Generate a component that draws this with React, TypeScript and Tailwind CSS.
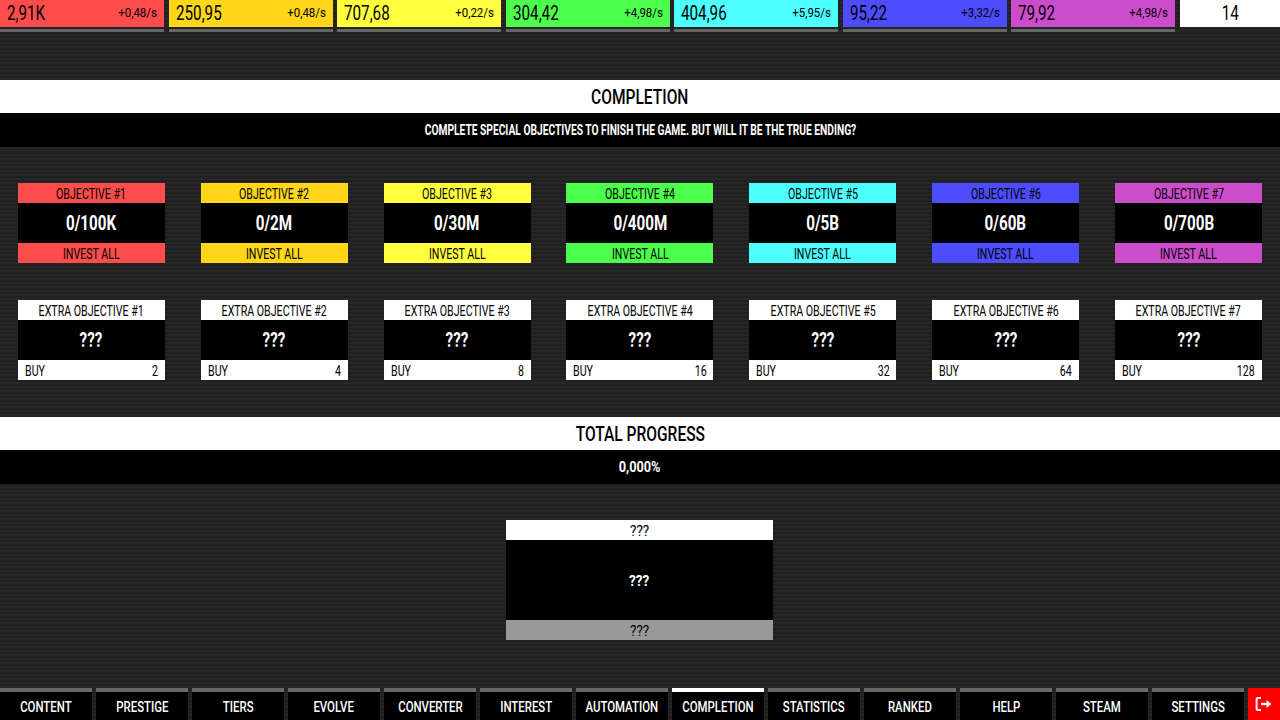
import React from 'react';

const font = "font-['Roboto',sans-serif]";

const resources = [
  { value: '2,91K', rate: '+0,48/s', bg: 'bg-[#ff4d4d]' },
  { value: '250,95', rate: '+0,48/s', bg: 'bg-[#ffd61a]' },
  { value: '707,68', rate: '+0,22/s', bg: 'bg-[#ffff40]' },
  { value: '304,42', rate: '+4,98/s', bg: 'bg-[#4dff4d]' },
  { value: '404,96', rate: '+5,95/s', bg: 'bg-[#4dffff]' },
  { value: '95,22', rate: '+3,32/s', bg: 'bg-[#4d4dff]' },
  { value: '79,92', rate: '+4,98/s', bg: 'bg-[#cc4dcc]' },
];

const objectives = [
  { goal: '0/100K', bg: 'bg-[#ff4d4d]', buy: 2 },
  { goal: '0/2M', bg: 'bg-[#ffd61a]', buy: 4 },
  { goal: '0/30M', bg: 'bg-[#ffff40]', buy: 8 },
  { goal: '0/400M', bg: 'bg-[#4dff4d]', buy: 16 },
  { goal: '0/5B', bg: 'bg-[#4dffff]', buy: 32 },
  { goal: '0/60B', bg: 'bg-[#4d4dff]', buy: 64 },
  { goal: '0/700B', bg: 'bg-[#cc4dcc]', buy: 128 },
];

const tabs = ['CONTENT', 'PRESTIGE', 'TIERS', 'EVOLVE', 'CONVERTER', 'INTEREST', 'AUTOMATION', 'COMPLETION', 'STATISTICS', 'RANKED', 'HELP', 'STEAM', 'SETTINGS'];

// the game's font is a condensed one, Roboto squeezed gets close
const Narrow: React.FC<{ children: React.ReactNode; className?: string }> = ({ children, className = 'origin-center scale-x-[0.76]' }) => (
  <span className={`inline-block whitespace-nowrap ${className}`}>{children}</span>
);

const SectionHeader: React.FC<{ title: string; sub: string; subScale: string; subSize: string }> = ({ title, sub, subScale, subSize }) => (
  <div>
    <div className="h-[33px] pt-[2px] bg-white text-black flex items-center justify-center text-[21px] font-medium">
      <Narrow className="scale-x-[0.74]">{title}</Narrow>
    </div>
    <div className={`h-[34px] bg-black text-white flex items-center justify-center font-bold ${subSize}`}>
      <Narrow className={subScale}>{sub}</Narrow>
    </div>
  </div>
);

export default function App() {
  return (
    <div className={`w-[1280px] h-[720px] overflow-hidden flex flex-col text-black bg-[#222222] bg-[repeating-linear-gradient(180deg,#202020_0px,#202020_2px,#262626_2px,#262626_4px)] ${font}`}>
      <div className="flex justify-between h-[32px]">
        {resources.map((r) => (
          <div key={r.bg} className="w-[164px] flex flex-col">
            <div className={`h-[27px] pb-px ${r.bg} flex items-center justify-between pl-[7px] pr-[7px]`}>
              <Narrow className="origin-left scale-x-[0.76] text-[20px]">{r.value}</Narrow>
              <Narrow className="origin-right scale-x-[0.88] text-[13px]">{r.rate}</Narrow>
            </div>
            <div className="mt-[2px] h-[3px] bg-[#666666]" />
          </div>
        ))}
        <div className="w-[100px] h-[27px] pb-px bg-white flex items-center justify-center text-[20px]">
          <Narrow>14</Narrow>
        </div>
      </div>

      <div className="mt-[48px]">
        <SectionHeader title="COMPLETION" sub="COMPLETE SPECIAL OBJECTIVES TO FINISH THE GAME. BUT WILL IT BE THE TRUE ENDING?" subScale="scale-x-[0.73]" subSize="text-[14px]" />
      </div>

      <div className="mt-[36px] grid grid-cols-7">
        {objectives.map((o, i) => (
          <div key={o.bg} className="w-[147px] mx-auto flex flex-col">
            <div className={`h-[20px] pt-[2px] ${o.bg} flex items-center justify-center text-[14px]`}><Narrow>OBJECTIVE #{i + 1}</Narrow></div>
            <div className="h-[40px] bg-black text-white flex items-center justify-center font-bold text-[20px]"><Narrow>{o.goal}</Narrow></div>
            <div className={`h-[20px] pt-[2px] ${o.bg} flex items-center justify-center text-[14px]`}><Narrow>INVEST ALL</Narrow></div>
          </div>
        ))}
      </div>

      <div className="mt-[37px] grid grid-cols-7">
        {objectives.map((o, i) => (
          <div key={o.bg} className="w-[147px] mx-auto flex flex-col">
            <div className="h-[20px] pt-[2px] bg-white flex items-center justify-center text-[14px]"><Narrow>EXTRA OBJECTIVE #{i + 1}</Narrow></div>
            <div className="h-[40px] bg-black text-white flex items-center justify-center font-bold text-[20px]"><Narrow>???</Narrow></div>
            <div className="h-[20px] pt-[2px] bg-white flex items-center justify-between px-[7px] text-[14px]">
              <Narrow className="origin-left scale-x-[0.76]">BUY</Narrow>
              <Narrow className="origin-right scale-x-[0.76]">{o.buy}</Narrow>
            </div>
          </div>
        ))}
      </div>

      <div className="mt-[37px]">
        <SectionHeader title="TOTAL PROGRESS" sub="0,000%" subScale="scale-x-[0.85]" subSize="text-[15px]" />
      </div>

      <div className="mt-[36px] w-[267px] ml-[506px] flex flex-col text-[15px]">
        <div className="h-[20px] pt-[2px] bg-white flex items-center justify-center"><Narrow className="scale-x-[0.9]">???</Narrow></div>
        <div className="h-[80px] pt-[2px] bg-black text-white font-bold flex items-center justify-center"><Narrow className="scale-x-[0.9]">???</Narrow></div>
        <div className="h-[20px] pt-[2px] bg-[#999999] flex items-center justify-center"><Narrow className="scale-x-[0.9]">???</Narrow></div>
      </div>

      <div className="mt-auto flex h-[32px]">
        {tabs.map((t) => (
          <div key={t} className="w-[96px] pr-[4px] flex flex-col">
            <div className={`h-[4px] ${t === 'COMPLETION' ? 'bg-white' : 'bg-[#666666]'}`} />
            <div className="flex-1 pt-[2px] bg-black text-white font-medium flex items-center justify-center text-[15px]"><Narrow>{t}</Narrow></div>
          </div>
        ))}
        <div className="w-[32px] bg-[#ff0000] flex items-center justify-center">
          <svg width="18" height="16" viewBox="0 0 18 16" fill="none" stroke="white" strokeWidth="2">
            <path d="M6 2H2.8A1.2 1.2 0 0 0 1.6 3.2V12.8A1.2 1.2 0 0 0 2.8 14H6" />
            <path d="M6 8H13" strokeWidth="2.4" />
            <path d="M11.5 4L16.5 8L11.5 12Z" fill="white" stroke="none" />
          </svg>
        </div>
      </div>
    </div>
  );
}
